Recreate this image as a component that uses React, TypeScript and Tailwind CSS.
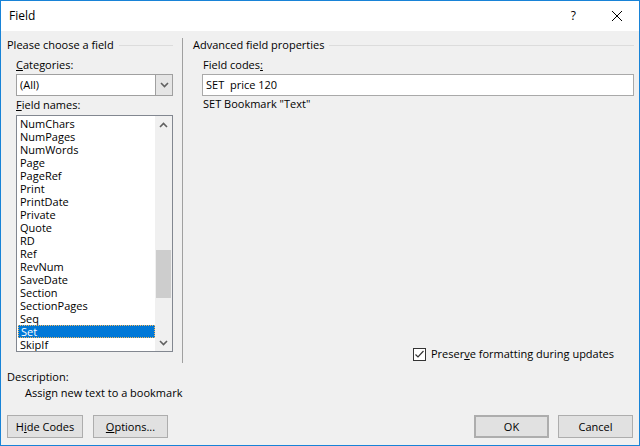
import React from 'react';

const fieldNames = [
  'NumChars',
  'NumPages',
  'NumWords',
  'Page',
  'PageRef',
  'Print',
  'PrintDate',
  'Private',
  'Quote',
  'RD',
  'Ref',
  'RevNum',
  'SaveDate',
  'Section',
  'SectionPages',
  'Seq',
  'Set',
  'SkipIf'
];

function Chevron({ up }: { up?: boolean }) {
  return (
    <svg width="9" height="6" viewBox="0 0 9 6">
      <path
        d={up ? 'M1 5 L4.5 1.5 L8 5' : 'M1 1 L4.5 4.5 L8 1'}
        fill="none"
        stroke="#606060"
        strokeWidth="1.6"
      />
    </svg>
  );
}

function DialogButton({ label, className }: { label: React.ReactNode; className?: string }) {
  return (
    <div
      className={`h-[23px] w-[75px] flex items-center justify-center bg-[#e1e1e1] border border-[#adadad] ${className || ''}`}
    >
      {label}
    </div>
  );
}

export default function App() {
  return (
    <div className="w-[640px] h-[446px] border border-[#1883d7] flex flex-col bg-[#f0f0f0] text-black text-[11px] leading-[16px] font-['Segoe_UI','Open_Sans',sans-serif]">
      {/* Title bar */}
      <div className="h-[30px] bg-white flex items-center pl-[8px] text-[12px]">
        <span>Field</span>
        <span className="ml-auto mr-[36px]">?</span>
        <svg width="10" height="10" viewBox="0 0 10 10" className="mr-[17px]">
          <path d="M0 0 L10 10 M10 0 L0 10" stroke="#000" strokeWidth="1" />
        </svg>
      </div>

      <div className="flex-1 flex flex-col pl-[6px] pr-[5px]">
        <div className="h-[334px] flex pt-[6px]">
          {/* Left group */}
          <div className="w-[166px] flex flex-col">
            <div className="h-[16px] flex items-center">
              <span>Please choose a field</span>
              <div className="flex-1 h-px bg-[#dcdcdc] ml-[5px]" />
            </div>
            <div className="mt-[4px] h-[16px] flex items-center pl-[9px]">
              <span>
                <span className="underline">C</span>ategories:
              </span>
            </div>
            <div className="mt-[1px] ml-[9px] h-[22px] flex border border-[#a0a0a0] bg-white">
              <div className="flex-1 flex items-center pl-[3px]">(All)</div>
              <div className="w-[17px] bg-[#e5e5e5] border-l border-[#a0a0a0] flex items-center justify-center">
                <Chevron />
              </div>
            </div>
            <div className="mt-[1px] h-[16px] flex items-center pl-[9px]">
              <span>
                <span className="underline">F</span>ield names:
              </span>
            </div>
            <div className="mt-[2px] ml-[9px] h-[237px] border border-[#828790] bg-white flex overflow-hidden">
              <div className="flex-1 flex flex-col pt-[1px] leading-[13px]">
                {fieldNames.map((name) =>
                  name === 'Set' ? (
                    <div
                      key={name}
                      className="h-[13px] shrink-0 ml-[1px] bg-[#0078d7] text-white border border-dotted border-[#f5b860] flex items-center pl-[2px]"
                    >
                      {name}
                    </div>
                  ) : (
                    <div key={name} className="h-[13px] shrink-0 flex items-center pl-[3px]">
                      {name}
                    </div>
                  )
                )}
              </div>
              <div className="w-[17px] bg-[#f0f0f0] flex flex-col">
                <div className="h-[17px] flex items-center justify-center">
                  <Chevron up />
                </div>
                <div className="flex-1 flex flex-col">
                  <div className="h-[117px]" />
                  <div className="h-[48px] mx-[1px] bg-[#cdcdcd]" />
                </div>
                <div className="h-[17px] flex items-center justify-center">
                  <Chevron />
                </div>
              </div>
            </div>
          </div>

          {/* Separator */}
          <div className="ml-[9px] w-px bg-[#a0a0a0] mt-[1px] mb-[2px]" />

          {/* Right group */}
          <div className="ml-[10px] flex-1 flex flex-col">
            <div className="h-[16px] flex items-center">
              <span>Advanced field properties</span>
              <div className="flex-1 h-px bg-[#dcdcdc] ml-[5px]" />
            </div>
            <div className="mt-[4px] h-[16px] flex items-center pl-[10px]">
              <span>
                Field codes<span className="underline">:</span>
              </span>
            </div>
            <div className="mt-[1px] ml-[9px] h-[22px] border border-[#a9a9a9] bg-white flex items-center pl-[3px]">
              SET&nbsp; price 120
            </div>
            <div className="h-[16px] flex items-center pl-[10px]">SET Bookmark "Text"</div>
            <div className="mt-auto mb-[3px] h-[16px] flex items-center pl-[220px]">
              <div className="w-[13px] h-[13px] border border-[#333333] bg-white flex items-center justify-center">
                <svg width="11" height="11" viewBox="0 0 11 11">
                  <path d="M1.5 5.5 L4 8 L9.5 2" fill="none" stroke="#333333" strokeWidth="1.2" />
                </svg>
              </div>
              <span className="ml-[5px]">
                Preser<span className="underline">v</span>e formatting during updates
              </span>
            </div>
          </div>
        </div>

        <div className="mt-[4px] h-[16px] flex items-center">Description:</div>
        <div className="h-[16px] flex items-center pl-[18px]">Assign new text to a bookmark</div>

        <div className="mt-[14px] flex">
          <DialogButton
            className="w-[76px]"
            label={
              <span>
                H<span className="underline">i</span>de Codes
              </span>
            }
          />
          <DialogButton
            className="ml-[10px]"
            label={
              <span>
                <span className="underline">O</span>ptions...
              </span>
            }
          />
          <DialogButton className="ml-auto border-2 border-[#0078d7]" label="OK" />
          <DialogButton className="ml-[9px] mr-[1px]" label="Cancel" />
        </div>
      </div>
    </div>
  );
}
